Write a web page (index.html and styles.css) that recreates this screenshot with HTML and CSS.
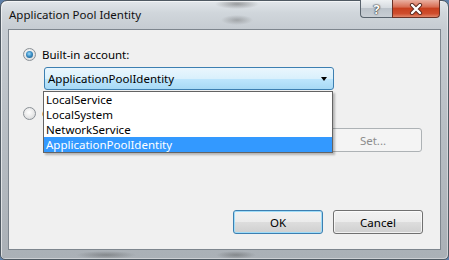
FILE: index.html
```html
<!DOCTYPE html>
<html lang="en">
<head>
  <meta charset="UTF-8">
  <title>Application Pool Identity</title>
  <link rel="stylesheet" href="styles.css">
</head>
<body>

  <div class="window">
    <div class="titlebar">
      <span class="title">Application Pool Identity</span>
      <div class="caption">
        <div class="cap-btn help">?</div>
        <div class="cap-btn close">
          <svg width="16" height="12" viewBox="0 0 16 12">
            <path d="M4 2 L12 10 M12 2 L4 10" stroke="#5a2a20" stroke-width="4.2" stroke-linecap="round"/>
            <path d="M4 2 L12 10 M12 2 L4 10" stroke="#fff" stroke-width="2.4" stroke-linecap="round"/>
          </svg>
        </div>
      </div>
    </div>

    <div class="client">
      <div class="option">
        <span class="radio checked"></span>
        <span>Built-in account:</span>
      </div>

      <div class="combo">
        <span>ApplicationPoolIdentity</span>
        <span class="arrow"></span>
      </div>

      <div class="option second">
        <span class="radio"></span>
        <span class="hidden-label">Custom account:</span>
      </div>

      <div class="custom-row">
        <div class="textbox"></div>
        <div class="btn disabled">Set...</div>
      </div>

      <div class="footer">
        <div class="btn default">OK</div>
        <div class="btn">Cancel</div>
      </div>

      <!-- open list of the combo, lies over the rows below -->
      <ul class="dropdown">
        <li>LocalService</li>
        <li>LocalSystem</li>
        <li>NetworkService</li>
        <li class="selected">ApplicationPoolIdentity</li>
      </ul>
    </div>
  </div>

</body>
</html>
```

FILE: styles.css
```css
body {
  margin: 0;
  font-family: 'Noto Sans', 'Open Sans', sans-serif;
  font-size: 11.5px;
  color: #000;
  background: #5d7fa8;
}
.window {
  width: 449px;
  height: 260px;
  box-sizing: border-box;
  border: 1px solid #4f5962;
  border-radius: 7px 7px 5px 5px;
  padding: 0 7px 9px 7px;
  display: flex;
  flex-direction: column;
  background:
    radial-gradient(ellipse 22px 5px at 236px 3px, rgba(70, 70, 70, 0.45), transparent),
    radial-gradient(ellipse 16px 5px at 236px 19px, rgba(80, 80, 80, 0.35), transparent),
    radial-gradient(ellipse 30px 4px at 105px 254px, rgba(60, 60, 60, 0.35), transparent),
    radial-gradient(ellipse 20px 4px at 235px 254px, rgba(60, 60, 60, 0.35), transparent),
    linear-gradient(to bottom, #e2e6ea 0, #d0d6db 12px, #c6ccd2 28px, #b9bfc5 120px, #aab0b6 100%);
  box-shadow: inset 1px 1px 0 rgba(255, 255, 255, 0.6), inset -1px -1px 0 rgba(255, 255, 255, 0.4);
}
.titlebar {
  height: 28px;
  display: flex;
  justify-content: space-between;
  align-items: flex-start;
}
.title {
  padding: 6px 0 0 1px;
  font-size: 11.5px;
  color: #111;
}
.caption {
  display: flex;
  margin: -1px 1px 0 0;
}
.cap-btn {
  height: 18px;
  box-sizing: border-box;
  border: 1px solid #59636d;
  border-top: none;
  display: flex;
  justify-content: center;
  align-items: center;
}
.help {
  width: 32px;
  border-radius: 0 0 0 4px;
  border-right: none;
  background: linear-gradient(to bottom, #eef1f3 0, #d6dbe0 45%, #bcc3ca 50%, #c8ced4 100%);
  color: #fff;
  font-weight: bold;
  font-size: 13px;
  text-shadow: 0 0 1px #333, 0 0 1px #333, 0 0 2px #444;
}
.close {
  width: 48px;
  border-radius: 0 0 4px 0;
  border-color: #6b3226;
  background: linear-gradient(to bottom, #eab1a2 0, #d86f55 40%, #c7401f 50%, #cf4d2d 80%, #e0866a 100%);
}
.client {
  position: relative;
  height: 221px;
  box-sizing: border-box;
  border: 1px solid #7e868e;
  background: #f0f0f0;
  padding: 18px 17px 15px 14px;
  display: flex;
  flex-direction: column;
}
.option {
  display: flex;
  align-items: center;
  gap: 6px;
  height: 13px;
}
.option.second {
  margin-top: 17px;
}
.radio {
  width: 13px;
  height: 13px;
  box-sizing: border-box;
  border-radius: 50%;
  border: 1px solid #8a9096;
  background: radial-gradient(circle at 45% 40%, #ffffff 0, #eeeeee 40%, #cfd1d3 100%);
  display: flex;
  justify-content: center;
  align-items: center;
}
.radio.checked::after {
  content: "";
  width: 7px;
  height: 7px;
  border-radius: 50%;
  background: radial-gradient(circle at 45% 40%, #9fdcfb 0, #3d8fc6 45%, #0f4c78 100%);
}
.combo {
  margin: 6px 0 0 21px;
  width: 290px;
  height: 23px;
  box-sizing: border-box;
  border: 1px solid #3c7fb1;
  border-radius: 3px;
  background: linear-gradient(to bottom, #eaf6fd 0, #d9f0fc 50%, #bee6fd 51%, #a7d9f5 100%);
  display: flex;
  align-items: center;
  justify-content: space-between;
  padding: 0 6px 0 3px;
}
.arrow {
  width: 0;
  height: 0;
  border-left: 3.5px solid transparent;
  border-right: 3.5px solid transparent;
  border-top: 4px solid #000;
}
.custom-row {
  margin: 8px 1px 0 21px;
  display: flex;
  justify-content: space-between;
  align-items: center;
}
.textbox {
  width: 260px;
  height: 22px;
  border: 1px solid #aeb3b9;
  background: #f0f0f0;
}
.btn {
  width: 90px;
  height: 24px;
  box-sizing: border-box;
  border: 1px solid #707070;
  border-radius: 3px;
  background: linear-gradient(to bottom, #f2f2f2 0, #ebebeb 50%, #dddddd 51%, #cfcfcf 100%);
  box-shadow: inset 0 0 0 1px rgba(255, 255, 255, 0.7);
  display: flex;
  justify-content: center;
  align-items: center;
}
.btn.disabled {
  width: 98px;
  border-color: #adb2b5;
  background: #f4f4f4;
  box-shadow: none;
  color: #8d8d8d;
}
.btn.default {
  border-color: #3c7fb1;
  box-shadow: inset 0 0 0 1px #9fdcf8;
}
.footer {
  margin-top: auto;
  display: flex;
  justify-content: flex-end;
  gap: 10px;
}
.dropdown {
  position: absolute;
  left: 34px;
  top: 61px;
  width: 290px;
  margin: 0;
  padding: 0;
  list-style: none;
  box-sizing: border-box;
  border: 1px solid #646464;
  background: #fff;
  box-shadow: 2px 2px 2px rgba(0, 0, 0, 0.25);
}
.dropdown li {
  height: 15px;
  line-height: 15px;
  padding-left: 2px;
}
.dropdown li.selected {
  background: #3399ff;
  color: #fff;
}
```
